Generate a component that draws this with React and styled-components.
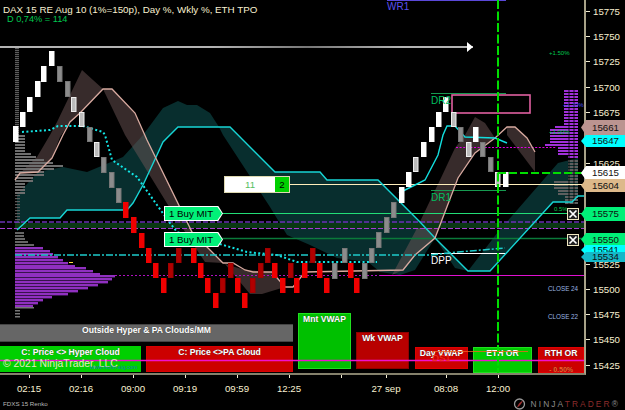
import React from 'react';
import styled, { createGlobalStyle } from 'styled-components';

const GlobalStyle = createGlobalStyle`
  html, body {
    margin: 0;
    padding: 0;
    background: #000;
  }
`;

const Page = styled.div`
  width: 625px;
  height: 410px;
  background: #000;
  overflow: hidden;
  font-family: "Liberation Sans", Arial, sans-serif;
  color: #f8f0d0;
  display: flex;
  flex-direction: column;
`;

const Stage = styled.div`
  position: relative;
  display: flex;
  height: 375px;
  flex: none;
`;

const Plot = styled.div`
  position: relative;
  width: 586px;
  height: 375px;
  box-sizing: border-box;
  border-right: 2px solid #a8a288;
  border-bottom: 2px solid #85816c;
  flex: none;
`;

const ChartSvg = styled.svg`
  position: absolute;
  left: 0;
  top: 0;
  width: 586px;
  height: 375px;
  z-index: ${p => p.$layer};
  pointer-events: none;
`;

const Header = styled.div`
  position: absolute;
  left: 3px;
  top: 4px;
  z-index: 3;
  font-size: 9.8px;
  line-height: 11px;
  white-space: nowrap;
`;

const Delta = styled.div`
  margin-left: 4px;
  margin-top: -1px;
  color: #00c850;
  font-size: 9.2px;
`;

const StatusStrip = styled.div`
  position: absolute;
  left: 0;
  top: 313px;
  z-index: 2;
  display: flex;
  align-items: flex-start;
  color: #fff;
  font-size: 8.6px;
  font-weight: 700;
  line-height: 10px;
  text-align: center;
  text-shadow: 0 0 1px #333;
`;

const LeftStack = styled.div`
  width: 293px;
  margin-top: 11px;
  margin-right: 5px;
  display: flex;
  flex-direction: column;
  gap: 4px;
`;

const Outside = styled.div`
  height: 18px;
  box-sizing: border-box;
  background: #666;
  border-top: 1px solid #444;
  border-bottom: 1px solid #444;
  text-align: center;
`;

const CloudRow = styled.div`
  display: flex;
  gap: 5px;
`;

const Cell = styled.div`
  box-sizing: border-box;
  flex: none;
  width: ${p => p.$w}px;
  height: ${p => p.$h}px;
  margin-top: ${p => p.$top || 0}px;
  margin-right: ${p => p.$gap || 0}px;
  background: ${p => p.$bg};
  border: 1px solid ${p => p.$line || p.$bg};
`;

const Pct = styled.div`
  margin-top: 7px;
  color: #ff5a20;
  font-size: 7px;
`;

const Copyright = styled.div`
  position: absolute;
  left: 3px;
  top: 358px;
  z-index: 4;
  color: #e4e8c0;
  font-size: 10.4px;
  line-height: 12px;
  white-space: nowrap;
`;

const Site = styled.div`
  position: absolute;
  left: 90px;
  top: 363px;
  z-index: 4;
  color: #1678b8;
  font-size: 5.5px;
  line-height: 8px;
  white-space: nowrap;
`;

const BuyTag = styled.div`
  position: absolute;
  left: 164px;
  top: ${p => p.$top}px;
  z-index: 3;
  width: 59px;
  height: 15px;
  box-sizing: border-box;
  padding-left: 5px;
  background: #fff;
  clip-path: polygon(0 0, 92% 0, 100% 50%, 92% 100%, 0 100%);
  color: #000;
  font-size: 9.7px;
  line-height: 15px;
  white-space: nowrap;
  isolation: isolate;
  &::before {
    content: '';
    position: absolute;
    inset: 1px;
    background: #00f078;
    clip-path: polygon(0 0, 92% 0, 100% 50%, 92% 100%, 0 100%);
    z-index: -1;
  }
`;

const OrderBox = styled.div`
  position: absolute;
  left: 224px;
  top: 176px;
  z-index: 3;
  display: flex;
  width: 66px;
  height: 17px;
  box-sizing: border-box;
  border: 1px solid #ddd8b0;
  background: #fff;
  font-size: 9.7px;
  line-height: 15px;
  text-align: center;
`;

const OrderQty = styled.div`
  flex: 1;
  color: #55c060;
`;

const OrderFill = styled.div`
  width: 14px;
  background: #00d000;
  color: #000;
`;

const CloseBox = styled.div`
  position: absolute;
  left: 567px;
  top: ${p => p.$top}px;
  z-index: 3;
  width: 12px;
  height: 12px;
  box-sizing: border-box;
  border: 1px solid #f0e8c0;
  background: #222;
  display: flex;
  svg {
    width: 10px;
    height: 10px;
  }
`;

const PriceAxis = styled.div`
  width: 39px;
  flex: none;
  margin-top: -1.2px;
  display: flex;
  flex-direction: column;
`;

const PriceRow = styled.div`
  height: 25.27px;
  flex: none;
  display: flex;
  align-items: center;
  gap: 3px;
  font-size: 9.7px;
  &::before {
    content: '';
    width: 4px;
    height: 1px;
    background: #f0ead0;
  }
`;

const PriceTag = styled.div`
  position: absolute;
  left: 581px;
  top: ${p => p.$top}px;
  z-index: ${p => p.$z || 3};
  width: 44px;
  height: ${p => p.$h}px;
  box-sizing: border-box;
  padding-left: 11px;
  background: ${p => p.$bg};
  clip-path: polygon(0 50%, 5px 0, 100% 0, 100% 100%, 5px 100%);
  color: #111;
  font-size: 9.7px;
  line-height: ${p => p.$h}px;
`;

const TimeAxis = styled.div`
  display: flex;
  height: 22px;
  flex: none;
  padding-left: 3px;
`;

const TimeCell = styled.div`
  width: ${p => p.$w}px;
  flex: none;
  display: flex;
  flex-direction: column;
  align-items: center;
  font-size: 9.7px;
  line-height: 11px;
  white-space: nowrap;
  &::before {
    content: '';
    width: 1px;
    height: 3px;
    margin-bottom: 5px;
    background: #f0ead0;
  }
`;

const Footer = styled.div`
  display: flex;
  justify-content: space-between;
  align-items: center;
  height: 13px;
  padding: 0 5px 0 3px;
`;

const Instrument = styled.div`
  color: #b8b8b8;
  font-size: 6.2px;
`;

const Brand = styled.div`
  display: flex;
  align-items: center;
  gap: 4px;
  font-size: 8.4px;
  letter-spacing: 2.1px;
  color: #8a8a8a;
  white-space: nowrap;
  svg {
    width: 14px;
    height: 12px;
  }
  b {
    font-weight: 400;
    color: #8c2c2c;
  }
`;

// x, top, bottom, kind
const candles = [
  [13, 126, 142, 'w'], [20, 112, 127, 'w'], [27, 97, 112, 'w'], [35, 81, 97, 'w'], [41, 66, 82, 'w'], [49, 51, 66, 'w'],
  [57, 66, 82, 'g'], [65, 81, 97, 'g'], [71, 97, 112, 'l'], [79, 112, 127, 'l'], [87, 127, 142, 'g'], [94, 142, 157, 'l'],
  [101, 157, 173, 'g'], [109, 172, 188, 'g'], [116, 188, 203, 'g'],
  [123, 202, 218, 'r'], [131, 217, 233, 'r'], [139, 233, 248, 'r'], [146, 248, 263, 'r'], [153, 263, 278, 'r'],
  [161, 278, 293, 'r'], [168, 263, 278, 'd'], [176, 248, 263, 'd'], [191, 248, 263, 'r'], [198, 263, 278, 'r'],
  [205, 278, 293, 'r'], [213, 293, 308, 'r'], [220, 278, 293, 'd'], [228, 263, 278, 'd'], [235, 278, 293, 'r'],
  [242, 293, 308, 'r'], [250, 278, 293, 'd'], [258, 263, 278, 'd'], [265, 248, 263, 'd'], [272, 263, 278, 'r'],
  [280, 278, 293, 'r'], [288, 263, 278, 'd'], [294, 278, 293, 'r'], [302, 263, 278, 'r'], [310, 248, 263, 'd'],
  [317, 263, 278, 'r'], [324, 278, 293, 'r'], [332, 263, 279, 'g'], [342, 248, 263, 'g'], [348, 263, 278, 'r'],
  [354, 278, 293, 'r'], [362, 263, 279, 'g'], [369, 248, 263, 'g'], [376, 232, 248, 'g'], [384, 217, 233, 'g'],
  [391, 202, 218, 'g'], [399, 187, 203, 'w'], [406, 172, 187, 'w'], [413, 157, 172, 'l'], [421, 142, 157, 'w'],
  [429, 127, 142, 'w'], [436, 112, 127, 'w'], [443, 97, 112, 'w'], [451, 112, 127, 'l'], [458, 127, 142, 'g'],
  [466, 142, 157, 'l'], [473, 127, 142, 'w'], [480, 142, 157, 'g'], [488, 157, 172, 'g'], [495, 172, 187, 'l'],
  [503, 172, 187, 'w'],
];

const candleColors = {
  w: ['#fff', '#fff'],
  l: ['#bbb', '#eee'],
  g: ['#8c8c8c', '#777'],
  r: ['#f00000', '#f00000'],
  d: ['#b00000', '#a00000'],
};

// top, right edge of each volume row
const grayLeft = [
  [135, 25], [138, 25], [141, 25], [144, 25], [147, 25], [150, 25], [153, 31], [156, 36], [159, 44], [162, 53], [165, 63],
  [168, 54], [171, 44], [174, 44], [177, 33], [180, 33], [183, 25], [186, 25], [189, 25], [192, 25],
];
const purpleLeft = [
  [247, 43], [250, 50], [253, 53], [256, 58], [259, 63], [262, 68], [265, 75], [267, 86], [270, 93], [273, 100], [275, 115],
  [278, 112], [281, 108], [284, 98], [287, 88], [290, 78], [293, 68], [296, 52], [299, 43], [302, 38], [305, 33],
];
const grayLow = [[232, 24], [235, 24], [238, 25], [241, 28], [244, 34]];
const purpleRight = [
  [90, 564], [93, 564], [96, 564], [99, 564], [102, 564], [105, 564], [108, 564], [111, 564], [114, 564], [117, 564],
  [120, 564], [123, 564], [126, 555], [129, 550], [132, 550], [135, 550], [138, 550], [141, 550], [144, 545], [147, 558],
  [150, 558], [153, 558], [156, 568],
];
const grayRight = [
  [160, 568], [163, 568], [166, 568], [169, 568], [172, 568], [175, 568], [178, 568], [181, 554], [184, 554], [187, 554],
  [190, 558], [193, 558], [196, 565], [199, 565], [202, 565],
];

const tealA = '17,195 38,172 63,167 87,172 123,157 143,135 163,108 178,101 187,105 197,105 210,113 219,127 178,127 163,142 143,185 133,203 127,210 67,210 60,218 30,218 17,230';
const tealB = '219,127 230,127 243,140 275,172 320,172 327,180 378,180 420,222 435,238 468,271 455,268 435,238 415,270 400,275 380,272 368,262 337,258 310,245 287,235 270,207 223,135';
const tealC = '468,271 490,271 553,202 572,202 578,196 578,158 558,163 498,232';

const brownA = '15,178 37,157 50,135 57,122 82,70 93,80 103,89 80,113 70,122 60,137 52,158 38,172 20,173';
const brownB = '103,89 112,89 135,113 147,140 192,232 210,250 223,263 205,262 187,235 168,205 125,135';
const brownC = '225,264 245,270 272,272 285,287 262,294 250,294';
const brownD = '392,275 415,232 440,180 455,148 465,135 475,117 485,123 495,138 475,153 458,178 435,238 415,255 403,270';
const brownE = '507,127 515,127 527,138 535,152 535,172 507,135';

const hyper = '17,230 30,218 60,218 67,210 127,210 133,203 143,185 157,155 163,142 178,127 230,127 243,140 275,172 320,172 327,180 378,180 420,222 435,238 468,271 490,271 553,202 572,202 578,196 584,196';
const paLine = '15,180 20,173 38,172 52,158 63,135 70,122 80,113 103,89 112,89 135,113 147,140 192,232 210,250 223,263 233,263 245,270 253,272 272,272 285,287 293,287 305,272 403,270 415,255 435,238 458,178 475,153 495,138 507,127 515,127 527,138 535,152';
const dotted = '22,132 50,130 58,126 83,126 103,132 105,135 112,160 137,177 157,205 170,223 177,232 223,245 247,252 277,255 297,262 377,262';
const trail = '399,193 415,185 425,180 438,155 443,135 447,126 455,126 465,137 495,138 507,143';

// the levels behind a price tag show a tick only
const prices = [15775, 15750, 15725, 15700, 15675, '', 15625, '', '', '', 15525, 15500, 15475, 15450, 15425];

const times = [
  [52, '02:15'], [52, '02:16'], [52, '09:00'], [52, '09:19'], [52, '09:59'], [52, '12:25'],
  [53, ''], [36, '27 sep'], [84, '08:08'], [20, '12:00'],
];

function Rows({ rows, from, color, h = 2 }) {
  return rows.map(([y, edge]) => (
    <rect
      key={y}
      x={from === undefined ? edge : from}
      y={y}
      width={from === undefined ? 578 - edge : edge - from}
      height={h}
      fill={color}
    />
  ));
}

function Chart() {
  const spine = [];
  for (let y = 48; y < 135; y += 2) spine.push([y, 19]);
  for (let y = 195; y < 231; y += 3) spine.push([y, 20]);

  return (
    <ChartSvg $layer={1} viewBox="0 0 586 375">
      <defs>
        <linearGradient id="arrowFade" gradientUnits="userSpaceOnUse" x1="0" x2="473" y1="0" y2="0">
          <stop offset="0.45" stopColor="#fff" />
          <stop offset="0.65" stopColor="#aaa" />
          <stop offset="0.85" stopColor="#fff" />
        </linearGradient>
      </defs>
      <g fill="#082e2e">
        <polygon points={tealA} />
        <polygon points={tealB} />
        <polygon points={tealC} />
      </g>
      <g fill="rgb(110,85,85)" fillOpacity="0.5">
        <polygon points={brownA} />
        <polygon points={brownB} />
        <polygon points={brownC} />
        <polygon points={brownD} />
        <polygon points={brownE} />
      </g>

      <Rows rows={spine} from={15} color="#5c5c5c" h={1.2} />
      <Rows rows={grayLeft} from={15} color="#6e6e6e" />
      <Rows rows={grayLow} from={15} color="#666" />
      <Rows rows={purpleLeft} from={15} color="#9030c0" h={2.4} />
      {[307, 310, 313, 316].map(y => (
        <rect key={y} x={15} y={y} width={y > 309 ? 5 : 19} height={1.5} fill="#777" />
      ))}
      <rect x={69} y={262} width={4} height={1} fill="#ffe040" />
      <Rows rows={purpleRight} color="#a030d8" />
      <Rows rows={grayRight} color="#5e5e5e" />
      {[568.5, 573.5].map(x => (
        <rect key={x} x={x} y={88} width={1} height={118} fill="#000" fillOpacity="0.8" />
      ))}

      <rect x={15} y={223} width={569} height={5} fill="#0a3814" />
      <line x1={0} x2={584} y1={222} y2={222} stroke="#6a32b4" strokeWidth="1.4" strokeDasharray="5 2" />
      <line x1={0} x2={584} y1={228.5} y2={228.5} stroke="#a63ed0" strokeWidth="1.2" strokeDasharray="5 2" />

      <rect x={0} y={46.3} width={473} height={1.4} fill="url(#arrowFade)" />
      <polygon points="467,42 473,47 467,52" fill="#fff" />
      <line x1={387} x2={506} y1={0.5} y2={0.5} stroke="#5a48d8" />

      <line x1={222} x2={584} y1={213.5} y2={213.5} stroke="#22dd77" />
      <line x1={222} x2={584} y1={238.5} y2={238.5} stroke="#0b7a3a" strokeWidth="1.4" />
      <line x1={290} x2={584} y1={184.5} y2={184.5} stroke="#ffeebb" />
      <line x1={431} x2={506} y1={93.5} y2={93.5} stroke="#169a50" />
      <line x1={431} x2={506} y1={190.5} y2={190.5} stroke="#169a50" />
      <line x1={431} x2={506} y1={253.5} y2={253.5} stroke="#fff" />
      <line x1={456} x2={556} y1={147.5} y2={147.5} stroke="#e000e0" strokeWidth="1.2" strokeDasharray="2 1.6" />
      <line x1={115} x2={380} y1={275.5} y2={275.5} stroke="#b010c0" strokeWidth="1.2" strokeDasharray="2 2" />
      <line x1={380} x2={584} y1={275.5} y2={275.5} stroke="#e010d0" />
      <rect x={452} y={95} width={78} height={18} fill="none" stroke="#e060a0" strokeWidth="1.6" />

      <polyline points={hyper} fill="none" stroke="#17d5d5" strokeWidth="1.4" />
      <polyline points={paLine} fill="none" stroke="#d8aaa0" strokeWidth="1.3" />
      <polyline points={dotted} fill="none" stroke="#12e6e6" strokeWidth="2" strokeDasharray="2 2.4" />
      <polyline points={trail} fill="none" stroke="#12dede" strokeWidth="1.4" />
      <polyline
        points="15,255 430,255 458,252 505,248"
        fill="none"
        stroke="#1ecbcb"
        strokeWidth="1.5"
        strokeDasharray="7 2 2 2"
      />

      {candles.map(([x, top, bottom, kind]) => (
        <rect
          key={`${x}-${top}`}
          x={x + 0.5}
          y={top + 0.5}
          width={4.5}
          height={bottom - top - 1}
          fill={candleColors[kind][0]}
          stroke={candleColors[kind][1]}
        />
      ))}

      <line x1={498} x2={583} y1={173} y2={173} stroke="#00dd00" strokeWidth="2" strokeDasharray="8 3" />

      <g fontFamily="'Liberation Sans', Arial, sans-serif">
        <text x={387} y={10} fontSize="10" fill="#5a50f0">WR1</text>
        <text x={431} y={104} fontSize="10" fill="#00c060">DR2</text>
        <text x={431} y={201} fontSize="10" fill="#00c060">DR1</text>
        <text x={431} y={264} fontSize="10" fill="#fff">DPP</text>
        <g fontSize="6">
          <text x={549} y={55} fill="#00c850">+1.50%</text>
          <text x={549} y={134} fill="#00c850">+1.00%</text>
          <text x={563} y={107} fill="#4a50f0">+1.20%</text>
          <text x={554} y={211} fill="#00c850">0.5%</text>
        </g>
        <g fontSize="6.3" fill="#9ab6e0">
          <text x={548} y={291}>CLOSE 24</text>
          <text x={548} y={319}>CLOSE 22</text>
        </g>
      </g>
    </ChartSvg>
  );
}

function ChartOverlay() {
  return (
    <ChartSvg $layer={3} viewBox="0 0 586 375">
      <line x1={0} x2={584} y1={360.5} y2={360.5} stroke="#f010d0" strokeWidth="1.4" />
      <line x1={498} x2={498} y1={0} y2={373} stroke="#00dd00" strokeWidth="2" strokeDasharray="9 2.5" />
      <line x1={432} x2={528} y1={351.5} y2={351.5} stroke="#f06020" strokeWidth="0.8" />
      <text x={432} y={361} fontFamily="'Liberation Sans', Arial, sans-serif" fontSize="9.6" fill="#f03020">DS1</text>
    </ChartSvg>
  );
}

function CloseMark({ top }) {
  return (
    <CloseBox $top={top}>
      <svg viewBox="0 0 10 10">
        <path d="M1.5 1.5 8.5 8.5 M8.5 1.5 1.5 8.5" stroke="#fff" strokeWidth="1.7" />
      </svg>
    </CloseBox>
  );
}

export default function App() {
  return (
    <Page>
      <GlobalStyle />
      <Stage>
        <Plot>
          <Chart />
          <Header>
            DAX 15 RE Aug 10 (1%=150p), Day %, Wkly %, ETH TPO
            <Delta>D 0,74% = 114</Delta>
          </Header>
          <BuyTag $top={206}>1 Buy MIT</BuyTag>
          <BuyTag $top={232}>1 Buy MIT</BuyTag>
          <OrderBox>
            <OrderQty>11</OrderQty>
            <OrderFill>2</OrderFill>
          </OrderBox>
          <CloseMark top={208} />
          <CloseMark top={234} />
          <StatusStrip>
            <LeftStack>
              <Outside>Outside Hyper &amp; PA Clouds/MM</Outside>
              <CloudRow>
                <Cell $w={141} $h={26} $bg="#00d000">C: Price &lt;&gt; Hyper Cloud</Cell>
                <Cell $w={147} $h={26} $bg="#cc0000" $line="#d80000">C: Price &lt;&gt;PA Cloud</Cell>
              </CloudRow>
            </LeftStack>
            <Cell $w={53} $h={56} $gap={5} $bg="#00c000" $line="#20e020">Mnt VWAP</Cell>
            <Cell $w={53} $h={37} $top={19} $gap={6} $bg="#b80000" $line="#900000">Wk VWAP</Cell>
            <Cell $w={53} $h={22} $top={34} $gap={5} $bg="#cc0000" $line="#e00000">Day VWAP</Cell>
            <Cell $w={59} $h={26} $top={34} $gap={6} $bg="#00cc00" $line="#20e020">ETH OR</Cell>
            <Cell $w={46} $h={26} $top={34} $bg="#cc0000" $line="#e00000">
              RTH OR
              <Pct>- 0.50%</Pct>
            </Cell>
          </StatusStrip>
          <ChartOverlay />
          <Copyright>© 2021 NinjaTrader, LLC</Copyright>
          <Site>www.mcfin-aig.com</Site>
        </Plot>
        <PriceAxis>
          {prices.map((p, i) => (
            <PriceRow key={i}>{p}</PriceRow>
          ))}
        </PriceAxis>
        <PriceTag $top={120} $h={15} $bg="#bb9490">15661</PriceTag>
        <PriceTag $top={135} $h={12} $bg="#00ffff">15647</PriceTag>
        <PriceTag $top={166} $h={14} $bg="#fff">15615</PriceTag>
        <PriceTag $top={179} $h={13} $bg="#ddb98a">15604</PriceTag>
        <PriceTag $top={207} $h={14} $bg="#00f078">15575</PriceTag>
        <PriceTag $top={233} $h={13} $bg="#00f078">15550</PriceTag>
        <PriceTag $top={245} $h={10} $bg="#00ffff">15541</PriceTag>
        <PriceTag $top={252} $h={10} $z={4} $bg="#14b8c8">15534</PriceTag>
      </Stage>
      <TimeAxis>
        {times.map(([w, label], i) => (
          <TimeCell key={i} $w={w}>{label}</TimeCell>
        ))}
      </TimeAxis>
      <Footer>
        <Instrument>FDXS 15 Renko</Instrument>
        <Brand>
          <svg viewBox="0 0 14 12">
            <circle cx="6.5" cy="6" r="5" fill="none" stroke="#999" strokeWidth="1.3" />
            <path d="M4 9.5C5 6 7 4 10 2.5 8.5 5.5 7 8 4 9.5Z" fill="#a03030" />
          </svg>
          <span>NINJA<b>TRADER</b>®</span>
        </Brand>
      </Footer>
    </Page>
  );
}
